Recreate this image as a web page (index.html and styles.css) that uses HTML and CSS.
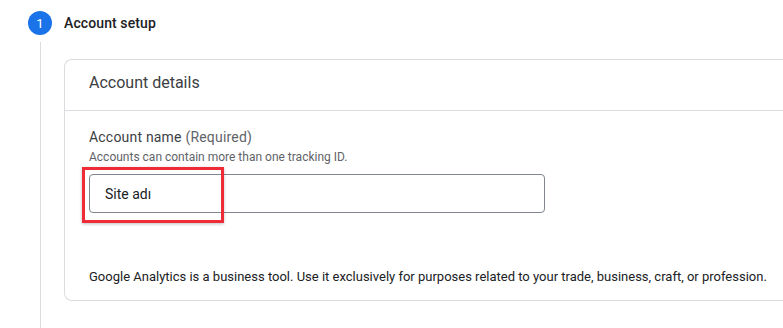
FILE: index.html
```html
<!DOCTYPE html>
<html lang="en">
<head>
  <meta charset="UTF-8">
  <title>Account setup - Google Analytics</title>
  <link rel="stylesheet" href="styles.css">
</head>
<body>
  <div class="stepper">
    <div class="step-head">
      <span class="step-num">1</span>
      <span class="step-title">Account setup</span>
    </div>
    <div class="step-body">
      <div class="card">
        <div class="card-header">Account details</div>
        <div class="card-content">
          <div class="field-label">Account name <span class="required">(Required)</span></div>
          <div class="field-hint">Accounts can contain more than one tracking ID.</div>
          <div class="field-wrap">
            <input class="text-input" type="text" value="Site adı">
            <div class="highlight"></div>
          </div>
          <p class="notice">Google Analytics is a business tool. Use it exclusively for purposes related to your trade, business, craft, or profession.</p>
        </div>
      </div>
    </div>
  </div>
</body>
</html>
```

FILE: styles.css
```css
body {
  margin: 0;
  background-color: #fff;
  font-family: Roboto, "Liberation Sans", Arial, sans-serif;
  color: #202124;
  overflow: hidden;
}
.stepper {
  padding-top: 11px;
  padding-left: 28px;
}
.step-head {
  display: flex;
  align-items: center;
  gap: 12px;
  height: 24px;
}
.step-num {
  width: 24px;
  height: 24px;
  border-radius: 50%;
  background-color: #1a73e8;
  color: white;
  font-size: 13px;
  display: flex;
  align-items: center;
  justify-content: center;
}
.step-title {
  font-size: 14px;
  font-weight: 500;
  color: #202124;
  letter-spacing: 0.1px;
}
.step-body {
  margin-left: 12px;
  margin-top: 7px;
  border-left: 1px solid #dadce0;
  padding-left: 23px;
  padding-top: 17px;
  height: 269px;
}
.card {
  width: 719px;
  border: 1px solid #dadce0;
  border-right: none;
  border-radius: 8px 0 0 8px;
}
.card-header {
  height: 44px;
  display: flex;
  align-items: center;
  padding: 0 24px 6px;
  font-size: 16px;
  color: #3c4043;
  border-bottom: 1px solid #dadce0;
}
.card-content {
  padding: 16px 24px 14px;
}
.field-label {
  font-size: 14px;
  line-height: 20px;
  color: #3c4043;
  letter-spacing: 0.2px;
}
.required {
  color: #5f6368;
}
.field-hint {
  font-size: 12px;
  line-height: 16px;
  margin-top: 2px;
  color: #5f6368;
}
.field-wrap {
  position: relative;
  margin-top: 9px;
  width: 456px;
}
.text-input {
  display: block;
  box-sizing: border-box;
  width: 456px;
  height: 39px;
  border: 1px solid #80868b;
  border-radius: 4px;
  padding: 0 15px;
  font-family: inherit;
  font-size: 14px;
  color: #202124;
  outline: none;
}
.highlight {
  position: absolute;
  left: -7px;
  top: -7px;
  width: 136px;
  height: 50px;
  border: 3px solid #ee2b36;
  box-shadow: 0 1px 3px rgba(0,0,0,0.25);
}
.notice {
  margin: 55px 0 0;
  font-size: 13px;
  line-height: 18px;
  color: #202124;
  white-space: nowrap;
}
```
